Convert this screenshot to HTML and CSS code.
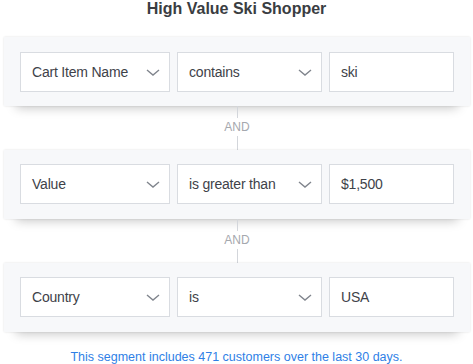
FILE: index.html
```html
<!DOCTYPE html>
<html>
<head>
<meta charset="utf-8">
<link rel="stylesheet" href="styles.css">
</head>
<body>
<div class="page">
  <h1 class="title">High Value Ski Shopper</h1>
  <div class="rules">
    <div class="card">
      <div class="field select w1"><span>Cart Item Name</span><svg class="chev" viewBox="0 0 14 7"><path d="M1 1l6 5 6-5"/></svg></div>
      <div class="field select w2"><span>contains</span><svg class="chev" viewBox="0 0 14 7"><path d="M1 1l6 5 6-5"/></svg></div>
      <div class="field value"><span>ski</span></div>
    </div>
    <div class="connector"><div class="line top"></div><div class="and">AND</div><div class="line bottom"></div></div>
    <div class="card">
      <div class="field select w1"><span>Value</span><svg class="chev" viewBox="0 0 14 7"><path d="M1 1l6 5 6-5"/></svg></div>
      <div class="field select w2"><span>is greater than</span><svg class="chev" viewBox="0 0 14 7"><path d="M1 1l6 5 6-5"/></svg></div>
      <div class="field value"><span>$1,500</span></div>
    </div>
    <div class="connector"><div class="line top"></div><div class="and">AND</div><div class="line bottom"></div></div>
    <div class="card">
      <div class="field select w1"><span>Country</span><svg class="chev" viewBox="0 0 14 7"><path d="M1 1l6 5 6-5"/></svg></div>
      <div class="field select w2"><span>is</span><svg class="chev" viewBox="0 0 14 7"><path d="M1 1l6 5 6-5"/></svg></div>
      <div class="field value"><span>USA</span></div>
    </div>
  </div>
  <p class="summary">This segment includes 471 customers over the last 30 days.</p>
</div>
</body>
</html>
```
FILE: styles.css
```css
html, body {
  margin: 0;
  padding: 0;
  background: #ffffff;
}
.page {
  width: 473px;
  font-family: "Liberation Sans", Arial, sans-serif;
  display: flex;
  flex-direction: column;
}
.title {
  margin: 0;
  height: 37px;
  font-size: 16px;
  line-height: 17px;
  font-weight: bold;
  color: #3a3d42;
  text-align: center;
  box-sizing: border-box;
}
.rules {
  display: flex;
  flex-direction: column;
  padding: 0 3px 0 4px;
}
.card {
  background: #f7f8fa;
  height: 69px;
  box-sizing: border-box;
  padding: 15px 16px 14px 16px;
  display: flex;
  gap: 7px;
  box-shadow: 0 0 2px rgba(0, 0, 0, 0.12), 0 14px 10px -12px rgba(0, 0, 0, 0.22);
}
.card + .connector + .card {
  padding-top: 14px;
  padding-bottom: 15px;
}
.field {
  height: 40px;
  box-sizing: border-box;
  background: #ffffff;
  border: 1px solid #d9dce1;
  display: flex;
  align-items: center;
  padding: 0 9px 0 11px;
  font-size: 14px;
  color: #3e4249;
  letter-spacing: -0.2px;
}
.field span {
  flex: 1;
  white-space: nowrap;
}
.w1 { width: 150px; }
.w2 { width: 145px; }
.value { flex: 1; }
.chev {
  width: 14px;
  height: 7px;
  fill: none;
  stroke: #80858d;
  stroke-width: 1.4;
}
.connector {
  height: 44px;
  display: flex;
  flex-direction: column;
  align-items: center;
}
.line {
  width: 1px;
  background: #d3d6db;
}
.line.top { height: 12px; }
.line.bottom { flex: 1; }
.and {
  height: 18px;
  line-height: 18px;
  font-size: 12px;
  color: #a5a8ae;
}
.summary {
  margin: 17px 0 0 0;
  text-align: center;
  font-size: 12.5px;
  line-height: 16px;
  color: #2f7fe6;
}
```
